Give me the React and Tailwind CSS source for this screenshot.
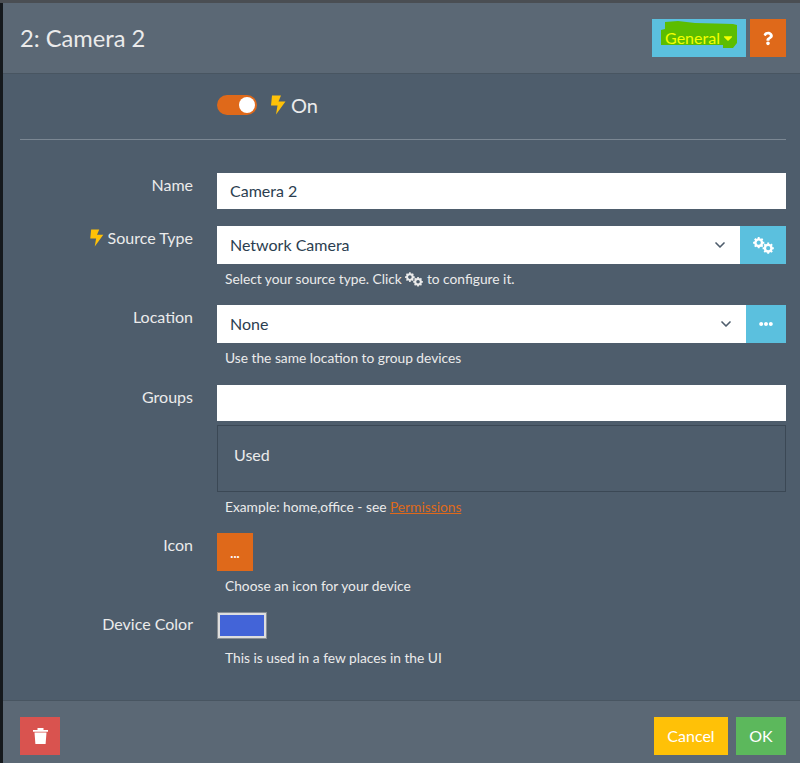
import React from 'react';
import { FaEllipsisH, FaQuestion, FaCaretDown } from 'react-icons/fa';
import { ChevronDown } from 'lucide-react';

const Bolt = ({ className }) => (
  <svg className={className} viewBox="0 0 15 20" fill="currentColor">
    <path d="M1 0.5L10 0.5L7.5 6.5L14.5 6.5L5 19.5L6.5 10.5L0 10.5Z" />
  </svg>
);

const Gear = ({ cx, cy }) => (
  <g stroke="currentColor" fill="none">
    <circle cx={cx} cy={cy} r="3.3" strokeWidth="2.4" />
    {[0, 45, 90, 135].map((a) => (
      <line
        key={a}
        x1={cx - 5.6 * Math.cos((a * Math.PI) / 180)}
        y1={cy - 5.6 * Math.sin((a * Math.PI) / 180)}
        x2={cx + 5.6 * Math.cos((a * Math.PI) / 180)}
        y2={cy + 5.6 * Math.sin((a * Math.PI) / 180)}
        strokeWidth="1.9"
        strokeDasharray="2 7.2"
      />
    ))}
  </g>
);

const Cogs = ({ className }) => (
  <svg className={className} viewBox="0 0 21 17">
    <Gear cx={5.7} cy={5.7} />
    <Gear cx={15.2} cy={11.2} />
  </svg>
);

const Trash = ({ className }) => (
  <svg className={className} viewBox="0 0 15 16" fill="currentColor">
    <path d="M4.5 0H10.5V2H15V3.8H0V2H4.5ZM1.5 4.6H13.5L12.6 16H2.4Z" />
  </svg>
);

const Row = ({ label, bolt, className = '', children }) => (
  <div className={`flex ${className}`}>
    <div className="w-[173px] shrink-0 text-right text-[16px] leading-[22px] pt-[1px] text-[#ebebeb]">
      {bolt && <Bolt className="inline-block w-[14px] h-[18px] mr-[4px] mb-[3px] text-[#ffc107]" />}
      {label}
    </div>
    <div className="ml-[24px] flex-1 min-w-0">{children}</div>
  </div>
);

const Help = ({ children }) => (
  <p className="pl-[8px] text-[13.75px] leading-[20px] text-[#ebebeb]">{children}</p>
);

const SelectBox = ({ value, button, buttonWidth }) => (
  <div className="flex h-[38px]">
    <div className="flex-1 bg-white flex items-center justify-between pl-[13px] pr-[12px] text-[16px] text-[#2b3e50]">
      <span>{value}</span>
      <ChevronDown className="w-[16px] h-[16px] text-[#4e5d6c]" strokeWidth={2.5} />
    </div>
    <button className={`${buttonWidth} bg-[#5bc0de] flex items-center justify-center text-white`}>{button}</button>
  </div>
);

export default function App() {
  return (
    <div className="w-[800px] h-[763px] overflow-hidden bg-[#15191d] pl-[3px] font-['Lato','Open_Sans',sans-serif]">
      <div className="h-[3px] -ml-[3px] bg-[#4a4e53]" />
      <div className="h-[760px] bg-[#4e5d6c] flex flex-col">
        {/* header */}
        <div className="h-[71px] shrink-0 bg-[#5b6875] border-b border-[#485561] flex items-center justify-between pl-[17px] pr-[14px]">
          <h1 className="text-[23.7px] text-[#ebebeb] leading-none pt-[1px]">2: Camera 2</h1>
          <div className="flex gap-[4px]">
            <button className="relative w-[94px] h-[38px] bg-[#5bc0de] text-[16px] text-[#f4ff00] flex items-center justify-center">
              <svg className="absolute inset-0 w-full h-full" viewBox="0 0 94 38">
                <path d="M13 3L26 2L43 4L63 4.5L81 5L85 6L85 24L81 29L71 29L71 26L9 26L9 11L13 10Z" fill="#5cbd00" />
              </svg>
              <span className="relative flex items-center">
                General
                <FaCaretDown className="w-[14px] h-[14px] ml-[1px] -mr-[2px]" />
              </span>
            </button>
            <button className="w-[36px] h-[38px] bg-[#df691a] flex items-center justify-center text-white">
              <FaQuestion className="w-[10px] h-[15px]" />
            </button>
          </div>
        </div>

        {/* body */}
        <div className="flex-1 pl-[17px] pr-[14px]">
          <div className="h-[66px] pb-[4px] border-b border-[#7b8793] pl-[197px] flex items-center">
            <div className="w-[40px] h-[20px] rounded-full bg-[#df691a] relative mr-[14px]">
              <div className="absolute right-[2px] top-[2px] w-[16px] h-[16px] rounded-full bg-white" />
            </div>
            <Bolt className="w-[15px] h-[20px] text-[#ffc107] mr-[5px]" />
            <span className="text-[20px] text-[#ebebeb]">On</span>
          </div>

          <Row label="Name" className="mt-[33px]">
            <div className="h-[36px] bg-white flex items-center pl-[13px] text-[16px] text-[#2b3e50]">Camera 2</div>
          </Row>

          <Row label="Source Type" bolt className="mt-[17px]">
            <SelectBox value="Network Camera" buttonWidth="w-[46px]" button={<Cogs className="w-[21px] h-[17px]" />} />
            <div className="mt-[5px]">
              <Help>
                Select your source type. Click <Cogs className="inline-block w-[18px] h-[15px] mb-[3px]" /> to configure it.
              </Help>
            </div>
          </Row>

          <Row label="Location" className="mt-[15px]">
            <SelectBox value="None" buttonWidth="w-[40px]" button={<FaEllipsisH className="w-[14px] h-[14px]" />} />
            <div className="mt-[5px]">
              <Help>Use the same location to group devices</Help>
            </div>
          </Row>

          <Row label="Groups" className="mt-[17px]">
            <div className="h-[36px] bg-white" />
            <div className="mt-[4px] h-[67px] border border-[#3b4855] pl-[16px] pt-[18px] text-[16px] leading-[22px] text-[#ebebeb]">Used</div>
            <div className="mt-[5px]">
              <Help>
                Example: home,office - see <a className="text-[#df691a] underline">Permissions</a>
              </Help>
            </div>
          </Row>

          <Row label="Icon" className="mt-[16px]">
            <button className="w-[36px] h-[38px] bg-[#df691a] text-white text-[13px] font-bold leading-none pt-[4px]">...</button>
            <div className="mt-[5px]">
              <Help>Choose an icon for your device</Help>
            </div>
          </Row>

          <Row label="Device Color" className="mt-[16px]">
            <div className="w-[50px] h-[27px] bg-[#4364d8] border-[3px] border-[#dedede] outline outline-1 -outline-offset-1 outline-[#8a8f94]" />
            <div className="mt-[9px]">
              <Help>This is used in a few places in the UI</Help>
            </div>
          </Row>
        </div>

        {/* footer */}
        <div className="h-[63px] shrink-0 bg-[#5b6875] border-t border-[#485561] flex items-start justify-between pl-[17px] pr-[14px] pt-[16px]">
          <button className="w-[40px] h-[38px] bg-[#d9534f] flex items-center justify-center text-white">
            <Trash className="w-[15px] h-[16px]" />
          </button>
          <div className="flex gap-[8px]">
            <button className="w-[74px] h-[38px] bg-[#ffc107] text-[16px] text-white">Cancel</button>
            <button className="w-[50px] h-[38px] bg-[#5cb85c] text-[16px] text-white">OK</button>
          </div>
        </div>
      </div>
    </div>
  );
}
